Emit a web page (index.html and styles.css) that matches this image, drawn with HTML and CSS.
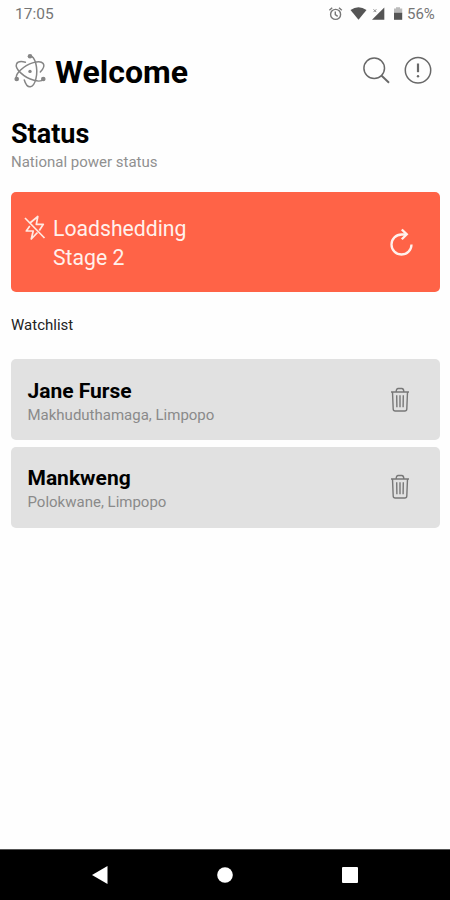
FILE: index.html
```html
<!DOCTYPE html>
<html lang="en">
<head>
  <meta charset="UTF-8" />
  <meta name="viewport" content="width=device-width, initial-scale=1.0"/>
  <title>Welcome</title>
  <link rel="stylesheet" href="styles.css">
</head>
<body>
  <div class="status-bar">
    <span class="clock">17:05</span>
    <svg class="system-icons" width="76" height="16" viewBox="328 6 76 16">
      <g fill="none" stroke="#777" stroke-width="1.4">
        <circle cx="335.6" cy="14.4" r="5"/>
        <path d="M335.3 11.4v3.3l2.4 1.6M329.4 10.2l2.8-2.5M341.800 10.200l-2.800-2.500"/>
      </g>
      <path d="M350.5 10Q358.5 4.300 366.500 10L358.500 19.700z" fill="#555"/>
      <path d="M384.300 7.500v12.200H372z" fill="#555"/>
      <path d="M373.500 9.300l2.800 2.800M376.300 9.300l-2.800 2.800" stroke="#888"/>
      <path d="M396 7.200h4v1.300h2.200v5H394v-5h2z" fill="#bbb"/>
      <path d="M394 12.800h8.200v7H394z" fill="#555"/>
    </svg>
    <span class="battery">56%</span>
  </div>

  <header>
    <svg class="logo" width="34" height="36" viewBox="13 53 34 36" fill="none" stroke="#858585" stroke-width="1.5" stroke-linecap="round">
      <path d="M30 56A6.800 15.400 0 1 1 24.300 80"/>
      <path d="M30 56A6.800 15.400 0 1 1 24.300 80" transform="rotate(120 30 71.400)"/>
      <path d="M30 56A6.800 15.400 0 1 1 24.300 80" transform="rotate(240 30 71.400)"/>
      <g fill="#858585" stroke="none">
        <circle cx="30" cy="56.300" r="2.300"/>
        <circle cx="43.300" cy="79" r="2.300"/>
        <circle cx="16.700" cy="79" r="2.300"/>
        <circle cx="30" cy="71.400" r="1.700"/>
      </g>
    </svg>
    <h1>Welcome</h1>
    <svg class="actions" width="70" height="30" viewBox="362 56 70 30" fill="none" stroke="#686868" stroke-width="1.500">
      <circle cx="374.200" cy="68.300" r="10.300"/>
      <path d="M381.400 75.500l7.600 7.300" stroke-width="1.900"/>
      <circle cx="418" cy="70.300" r="12.700"/>
      <path d="M418 63.500v8.700" stroke-width="2.200"/>
      <circle cx="418" cy="76.300" r="1.200" fill="#686868" stroke="none"/>
    </svg>
  </header>

  <main>
    <h2>Status</h2>
    <p class="subtitle">National power status</p>

    <div class="stage-card">
      <svg class="bolt" width="22" height="26" viewBox="24 215 22 26" fill="none" stroke="#ffe9e2" stroke-width="1.700" stroke-linejoin="round">
        <path d="M30 223L37.800 216.500L36.300 224.300H43.300L39.300 230.500M37.500 232.500L31.300 239L33.200 231H26.300L29.800 226"/>
        <path d="M25 218l19.500 20"/>
      </svg>
      <p class="stage">Loadshedding<br>Stage 2</p>
      <svg class="refresh" width="26" height="30" viewBox="389 228 26 30" fill="none" stroke="#fff1ec" stroke-width="2.300">
        <path d="M411.500 244.500A10 10 0 1 1 401.500 234.500H406"/>
        <path d="M401.800 229.500L406.800 234.300L401.800 239.300"/>
      </svg>
    </div>

    <h3>Watchlist</h3>

    <div class="area">
      <div>
        <h4>Jane Furse</h4>
        <p>Makhuduthamaga, Limpopo</p>
      </div>
      <svg class="trash" width="20" height="26" viewBox="0 0 20 26" fill="none" stroke="#777" stroke-width="1.400">
        <path d="M1 5h18M2.500 5l.7 17q.1 2 2 2h9.600q1.900 0 2-2L17.500 5M6.200 4.800q0-3.300 2-3.300h3.600q2 0 2 3.300M6.700 8.300l.2 12M10 8.300v12M13.300 8.300l-.2 12"/>
      </svg>
    </div>
    <div class="area">
      <div>
        <h4>Mankweng</h4>
        <p>Polokwane, Limpopo</p>
      </div>
      <svg class="trash" width="20" height="26" viewBox="0 0 20 26" fill="none" stroke="#777" stroke-width="1.400">
        <path d="M1 5h18M2.500 5l.7 17q.1 2 2 2h9.600q1.900 0 2-2L17.500 5M6.200 4.800q0-3.300 2-3.300h3.600q2 0 2 3.300M6.700 8.300l.2 12M10 8.300v12M13.300 8.300l-.2 12"/>
      </svg>
    </div>
  </main>

  <nav>
    <svg width="16" height="18" viewBox="0 0 16 18"><path d="M0 9L15.500 0v18z" fill="#fff"/></svg>
    <svg width="16" height="16" viewBox="0 0 16 16"><circle cx="8" cy="8" r="7.800" fill="#fff"/></svg>
    <svg width="16" height="16" viewBox="0 0 16 16"><rect width="16" height="16" rx="1" fill="#fff"/></svg>
  </nav>
</body>
</html>
```
FILE: styles.css
```css
* {
  box-sizing: border-box;
}

body {
  display: flex;
  flex-direction: column;
  height: 900px;
  margin: 0;
  font-family: Roboto, sans-serif;
  background: #fefefe;
  color: #000;
}

h1, h2, h3, h4, p {
  margin: 0;
}

svg {
  display: block;
  flex: none;
}

.status-bar {
  display: flex;
  align-items: center;
  height: 28px;
  padding: 0 15px;
  font-size: 15.5px;
  color: #757575;
}

.system-icons {
  margin-left: auto;
}

.battery {
  width: 31px;
  padding-left: 3px;
  font-size: 15px;
}

header {
  display: flex;
  align-items: center;
  height: 86px;
  padding: 0 18px 0 13px;
}

.logo {
  margin-right: 8px;
}

h1 {
  padding-top: 1px;
  font-size: 32px;
  line-height: 40px;
}

.actions {
  margin-left: auto;
}

main {
  flex: 1;
  padding: 1px 10px 0 11px;
}

h2 {
  font-size: 27px;
  line-height: 38px;
}

.subtitle {
  font-size: 15px;
  line-height: 19px;
  color: #909090;
}

.stage-card {
  display: flex;
  height: 100px;
  margin-top: 20px;
  padding: 23px 25px 0 13px;
  border-radius: 5px;
  background: #ff6347;
  color: #fff1ec;
}

.stage {
  margin: -1px 0 0 7px;
  font-size: 21.2px;
  line-height: 29px;
}

.refresh {
  margin: 13px 0 0 auto;
}

h3 {
  margin: 23px 0 24px;
  font-size: 15px;
  font-weight: 400;
  line-height: 20px;
  color: #222;
}

.area {
  display: flex;
  align-items: center;
  justify-content: space-between;
  height: 81px;
  margin-bottom: 6.5px;
  padding: 0 30px 0 16.5px;
  border-radius: 5px;
  background: #e1e1e1;
}

.area h4 {
  padding-top: 4px;
  font-size: 21px;
  line-height: 26px;
}

.area p {
  font-size: 15px;
  line-height: 22px;
  color: #8a8a8a;
}

nav {
  display: flex;
  align-items: center;
  justify-content: space-between;
  height: 51px;
  padding: 0 92px;
  border-top: 1px solid #555;
  background: #000;
}
```
